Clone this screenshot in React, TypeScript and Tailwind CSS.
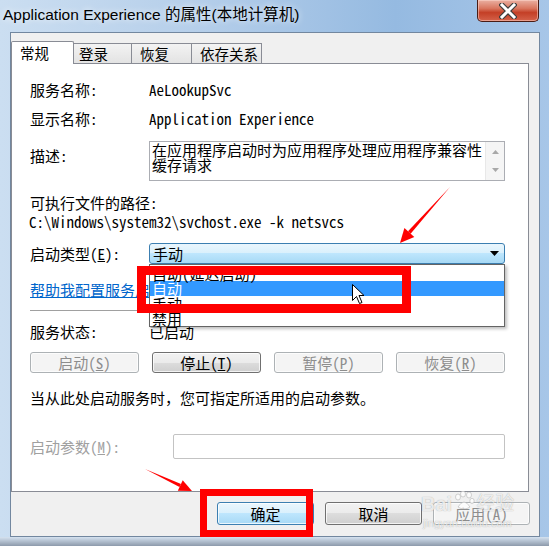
import React from "react";

const MONO = "[font-family:'Noto_Sans_Mono_CJK_SC','Noto_Sans_CJK_SC',monospace]";

type Kind = "normal" | "disabled" | "default";

function Btn({ children, size, kind }: { children: React.ReactNode; size: string; kind: Kind }) {
  const base =
    "flex items-center justify-center rounded-[3px] border text-[15px] leading-[16px] shadow-[inset_0_0_0_1px_rgba(255,255,255,0.75)]";
  const k =
    kind === "disabled"
      ? "border-[#adb2b5] bg-[#f4f4f4] text-[#8d8d8d]"
      : kind === "default"
      ? "border-[#3c7fb1] bg-[linear-gradient(#eaf6fd_0%,#d9f0fc_50%,#bee6fd_50%,#a7d9f5_100%)] text-black"
      : "border-[#707070] bg-[linear-gradient(#f2f2f2_0%,#ebebeb_50%,#dddddd_50%,#cfcfcf_100%)] text-black";
  return <div className={`${base} ${k} ${size}`}>{children}</div>;
}

function Row({ label, children }: { label: React.ReactNode; children?: React.ReactNode }) {
  return (
    <div className="flex items-center h-[16px]">
      <div className="w-[119px] whitespace-nowrap">{label}</div>
      <div className="whitespace-nowrap">{children}</div>
    </div>
  );
}

export default function App() {
  return (
    <div
      className={`relative w-[549px] h-[546px] overflow-hidden bg-[linear-gradient(90deg,#cbdef1_0%,#b6cfea_35%,#95bae1_72%,#a7c6e8_100%)] text-black ${MONO}`}
    >
      {/* Title bar */}
      <div className="h-[32px] flex items-start">
        <div className="pl-[3px] pt-[5px] text-[15.5px] leading-[20px] whitespace-nowrap [font-family:'Liberation_Sans','Noto_Sans_CJK_SC',sans-serif] [text-shadow:0_0_6px_rgba(255,255,255,0.95)]">
          Application Experience 的属性(本地计算机)
        </div>
        <div className="ml-auto mr-[10px] w-[62px] h-[22px] rounded-b-[5px] border border-t-0 border-[#4a1c14] bg-[linear-gradient(#eab0a2_0%,#d9765f_40%,#c43f26_60%,#d4624a_100%)] flex items-center justify-center shadow-[inset_0_0_0_1px_rgba(255,220,210,0.5)]">
          <svg width="18" height="16" viewBox="0 0 18 16">
            <path d="M3 2 L15 14 M15 2 L3 14" stroke="#3d3d3d" strokeWidth="5.2" strokeLinecap="square" />
            <path d="M3 2 L15 14 M15 2 L3 14" stroke="#ffffff" strokeWidth="3" strokeLinecap="square" />
          </svg>
        </div>
      </div>

      {/* Window body */}
      <div className="ml-[10px] mr-[9px] h-[505px] border border-[#72879f] bg-[#f0f0f0] flex flex-col">
        {/* Tabs */}
        <div className="mt-[8px] flex items-end h-[23px] relative z-10 text-[14.5px] leading-[16px]">
          <div className="w-[63px] h-[23px] border border-b-0 border-[#898c95] bg-white rounded-t-[2px] pl-[8px] pt-[3px]">
            常规
          </div>
          <div className="w-[58px] h-[20px] mb-[1px] border-t border-r border-[#898c95] bg-[linear-gradient(#f3f3f3,#e3e3e3)] pl-[5px] pt-[2px]">
            登录
          </div>
          <div className="w-[60px] h-[20px] mb-[1px] border-t border-r border-[#898c95] bg-[linear-gradient(#f3f3f3,#e3e3e3)] pl-[8px] pt-[2px]">
            恢复
          </div>
          <div className="w-[70px] h-[20px] mb-[1px] border-t border-r border-[#898c95] bg-[linear-gradient(#f3f3f3,#e3e3e3)] pl-[8px] pt-[2px] whitespace-nowrap">
            依存关系
          </div>
        </div>

        {/* Tab panel */}
        <div className="-mt-[1px] w-[518px] h-[429px] border border-[#898c95] bg-white pl-[18px] pt-[18px] text-[15px] leading-[16px]">
          <Row label="服务名称:">AeLookupSvc</Row>
          <div className="mt-[13px]">
            <Row label="显示名称:">Application Experience</Row>
          </div>

          <div className="mt-[14px] flex">
            <div className="w-[119px] pt-[7px]">描述:</div>
            <div className="w-[356px] h-[40px] border border-[#abadb3] bg-white flex">
              <div className="flex-1 pl-[2px] text-[15px] leading-[15px]">
                <div className="whitespace-nowrap">在应用程序启动时为应用程序处理应用程序兼容性</div>
                <div className="whitespace-nowrap">缓存请求</div>
              </div>
              <div className="w-[19px] bg-[#f5f5f5] border-l border-[#e8e8e8] flex flex-col items-center justify-between py-[8px]">
                <svg width="7" height="4" viewBox="0 0 7 4">
                  <path d="M0 4 L3.5 0 L7 4 Z" fill="#a8a8a8" />
                </svg>
                <svg width="7" height="4" viewBox="0 0 7 4">
                  <path d="M0 0 L7 0 L3.5 4 Z" fill="#a8a8a8" />
                </svg>
              </div>
            </div>
          </div>

          <div className="mt-[14px] h-[16px]">可执行文件的路径:</div>
          <div className="mt-[3px] h-[16px] -ml-[1px] whitespace-nowrap">C:\Windows\system32\svchost.exe -k netsvcs</div>

          <div className="mt-[13px] flex items-center">
            <div className="w-[119px]">
              启动类型(<u>E</u>):
            </div>
            <div className="w-[356px] h-[21px] rounded-[3px] border border-[#3c7fb1] bg-[linear-gradient(#eaf6fd_0%,#d9f0fc_50%,#bee6fd_50%,#a7d9f5_100%)] flex items-center pl-[3px] pr-[5px]">
              <span>手动</span>
              <svg className="ml-auto" width="9" height="5" viewBox="0 0 9 5">
                <path d="M0 0 L9 0 L4.5 5 Z" fill="#000" />
              </svg>
            </div>
          </div>

          <div className="mt-[18px] h-[16px] text-[#0066cc] underline whitespace-nowrap">帮助我配置服务启动选项。</div>

          <div className="mt-[12px] h-px w-[475px] bg-[#a0a0a0]" />

          <div className="mt-[13px]">
            <Row label="服务状态:">已启动</Row>
          </div>

          <div className="mt-[12px] w-[475px] flex justify-between">
            <Btn size="w-[109px] h-[21px]" kind="disabled">
              启动(<u>S</u>)
            </Btn>
            <Btn size="w-[109px] h-[21px]" kind="normal">
              停止(<u>T</u>)
            </Btn>
            <Btn size="w-[109px] h-[21px]" kind="disabled">
              暂停(<u>P</u>)
            </Btn>
            <Btn size="w-[109px] h-[21px]" kind="disabled">
              恢复(<u>R</u>)
            </Btn>
          </div>

          <div className="mt-[17px] h-[16px] whitespace-nowrap">当从此处启动服务时，您可指定所适用的启动参数。</div>

          <div className="mt-[28px] flex items-center">
            <div className="w-[143px] text-[#a0a0a0] whitespace-nowrap">
              启动参数(<u>M</u>):
            </div>
            <div className="w-[332px] h-[25px] rounded-[2px] border border-[#c3c3c3] bg-white" />
          </div>
        </div>

        {/* Bottom buttons */}
        <div className="mt-[10px] flex justify-end gap-[11px] pr-[9px]">
          <Btn size="w-[97px] h-[23px]" kind="default">确定</Btn>
          <Btn size="w-[97px] h-[23px]" kind="normal">取消</Btn>
          <Btn size="w-[97px] h-[23px]" kind="disabled">
            应用(<u>A</u>)
          </Btn>
        </div>
      </div>
      <div className="h-[9px] bg-[linear-gradient(#d5e2f0,#8d9aab)]" />

      {/* Open dropdown list */}
      <div className="absolute left-[149px] top-[264px] w-[356px] h-[63px] z-20 border border-[#646464] bg-white pt-[1px] text-[15px] leading-[15px] shadow-[2px_2px_3px_rgba(0,0,0,0.25)]">
        <div className="h-[15px] pl-[2px] whitespace-nowrap">自动(延迟启动)</div>
        <div className="h-[15px] pl-[2px] bg-[#3399ff] text-white">自动</div>
        <div className="h-[15px] pl-[2px]">手动</div>
        <div className="h-[15px] pl-[2px]">禁用</div>
      </div>

      {/* Red annotation boxes */}
      <div className="absolute left-[137px] top-[266px] w-[274px] h-[47px] border-[9px] border-[#ff0000] z-30" />
      <div className="absolute left-[200px] top-[489px] w-[113px] h-[48px] border-[7px] border-[#ff0000] z-30" />

      {/* Red arrows */}
      <svg className="absolute left-0 top-0 z-30 pointer-events-none" width="549" height="546" viewBox="0 0 549 546">
        <polygon points="450,187 410.6,233.7 408.0,231.3" fill="#ff0000" />
        <polygon points="400,243 414.3,236.9 404.4,228.1" fill="#ff0000" />
        <polygon points="145,469 179.5,487.0 181.0,484.0" fill="#ff0000" />
        <polygon points="192,491 177.8,490.8 182.7,480.3" fill="#ff0000" />
      </svg>

      {/* Mouse cursor */}
      <svg className="absolute left-[352px] top-[284px] z-40" width="13" height="21" viewBox="0 0 13 21">
        <path d="M0.5 0.5 L0.5 16.5 L4.5 12.5 L7.5 19.5 L10 18.5 L7 11.5 L12 11.5 Z" fill="#ffffff" stroke="#000" strokeWidth="1" strokeLinejoin="miter" />
      </svg>

      {/* Baidu watermark */}
      <div className="absolute left-[421px] top-[491px] z-30 text-[rgba(255,255,255,0.8)] [text-shadow:0_0_1px_rgba(0,0,0,0.35)] [font-family:'Liberation_Sans','Noto_Sans_CJK_SC',sans-serif]">
        <div className="flex items-end">
          <span className="text-[20px] leading-[22px] font-bold">Bai</span>
          <svg className="mx-[1px] mb-[4px]" width="22" height="20" viewBox="0 0 22 20">
            <g fill="rgba(255,255,255,0.75)" stroke="rgba(150,150,150,0.5)" strokeWidth="0.8">
              <ellipse cx="5" cy="6" rx="2.5" ry="3" />
              <ellipse cx="10" cy="3" rx="2.5" ry="3" />
              <ellipse cx="16" cy="4" rx="2.5" ry="3" />
              <ellipse cx="19" cy="10" rx="2.2" ry="2.7" />
              <path d="M5 16 Q11 6 17 16 Q11 20 5 16 Z" />
            </g>
          </svg>
          <span className="text-[19px] leading-[22px]">经验</span>
        </div>
        <div className="text-[11px] leading-[12px] mt-[2px] ml-[2px]">jingyan.baidu.com</div>
      </div>
    </div>
  );
}
